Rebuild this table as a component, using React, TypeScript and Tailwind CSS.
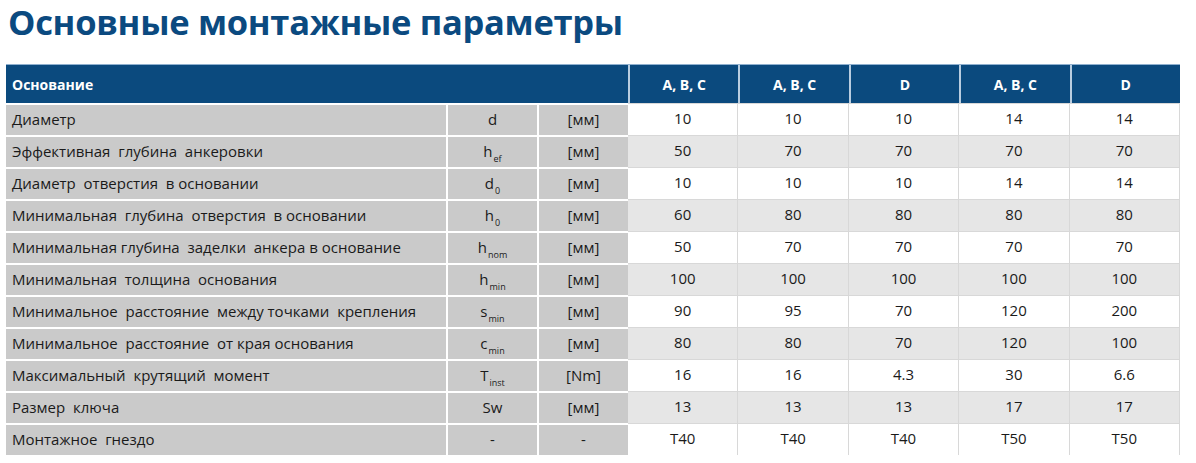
const cols = ['A, B, C', 'A, B, C', 'D', 'A, B, C', 'D'];

type Row = { label: string; sym: string; sub?: string; unit: string; vals: string[] };

const rows: Row[] = [
  { label: 'Диаметр', sym: 'd', unit: '[мм]', vals: ['10', '10', '10', '14', '14'] },
  { label: 'Эффективная  глубина  анкеровки', sym: 'h', sub: 'ef', unit: '[мм]', vals: ['50', '70', '70', '70', '70'] },
  { label: 'Диаметр  отверстия  в основании', sym: 'd', sub: '0', unit: '[мм]', vals: ['10', '10', '10', '14', '14'] },
  { label: 'Минимальная  глубина  отверстия  в основании', sym: 'h', sub: '0', unit: '[мм]', vals: ['60', '80', '80', '80', '80'] },
  { label: 'Минимальная глубина  заделки  анкера в основание', sym: 'h', sub: 'nom', unit: '[мм]', vals: ['50', '70', '70', '70', '70'] },
  { label: 'Минимальная  толщина  основания', sym: 'h', sub: 'min', unit: '[мм]', vals: ['100', '100', '100', '100', '100'] },
  { label: 'Минимальное  расстояние  между точками  крепления', sym: 's', sub: 'min', unit: '[мм]', vals: ['90', '95', '70', '120', '200'] },
  { label: 'Минимальное  расстояние  от края основания', sym: 'c', sub: 'min', unit: '[мм]', vals: ['80', '80', '70', '120', '100'] },
  { label: 'Максимальный  крутящий  момент', sym: 'T', sub: 'inst', unit: '[Nm]', vals: ['16', '16', '4.3', '30', '6.6'] },
  { label: 'Размер  ключа', sym: 'Sw', unit: '[мм]', vals: ['13', '13', '13', '17', '17'] },
  { label: 'Монтажное  гнездо', sym: '-', unit: '-', vals: ['T40', 'T40', 'T40', 'T50', 'T50'] },
];

export default function App() {
  return (
    <div className="bg-white w-[1196px] min-h-[463px]" style={{ fontFamily: '"Open Sans", "Liberation Sans", sans-serif' }}>
      <h1 className="pl-[8px] pb-[20px] text-[34.5px] leading-[44px] font-bold text-[#0b4a80] tracking-[-0.3px] whitespace-nowrap">
        Основные монтажные параметры
      </h1>

      <div className="ml-[6px] w-[1174px] text-[15px] text-[#1a1a1a]">
        <div className="grid grid-cols-[622px_repeat(5,1fr)] h-[39px] bg-[#0b4a7e] border-t border-[#8fb0cf] text-white font-bold text-[14px]">
          <div className="flex items-center pl-[6px]">Основание</div>
          {cols.map((c, i) => (
            <div key={i} className="flex items-center justify-center border-l-2 border-[#b9cde0]">
              {c}
            </div>
          ))}
        </div>

        {rows.map((r, i) => (
          <div key={i} className="grid grid-cols-[440px_91px_91px_repeat(5,1fr)] h-[32px]">
            <div className="flex items-center pl-[6px] pb-[2px] bg-[#cacaca] border-t-2 border-white whitespace-pre">
              {r.label}
            </div>
            <div className="flex items-center justify-center pb-[2px] bg-[#cacaca] border-t-2 border-l-2 border-white">
              <span>
                {r.sym}
                {r.sub && <sub className="text-[9px] align-[-3px] ml-[1px]">{r.sub}</sub>}
              </span>
            </div>
            <div className="flex items-center justify-center pb-[2px] bg-[#cacaca] border-t-2 border-l-2 border-white">
              {r.unit}
            </div>
            {r.vals.map((v, j) => (
              <div
                key={j}
                className={
                  'flex items-center justify-center pb-[2px] border-t border-r border-[#d8d8d8] ' +
                  (i % 2 === 1 ? 'bg-[#e6e6e6]' : 'bg-white')
                }
              >
                {v}
              </div>
            ))}
          </div>
        ))}
      </div>
    </div>
  );
}
